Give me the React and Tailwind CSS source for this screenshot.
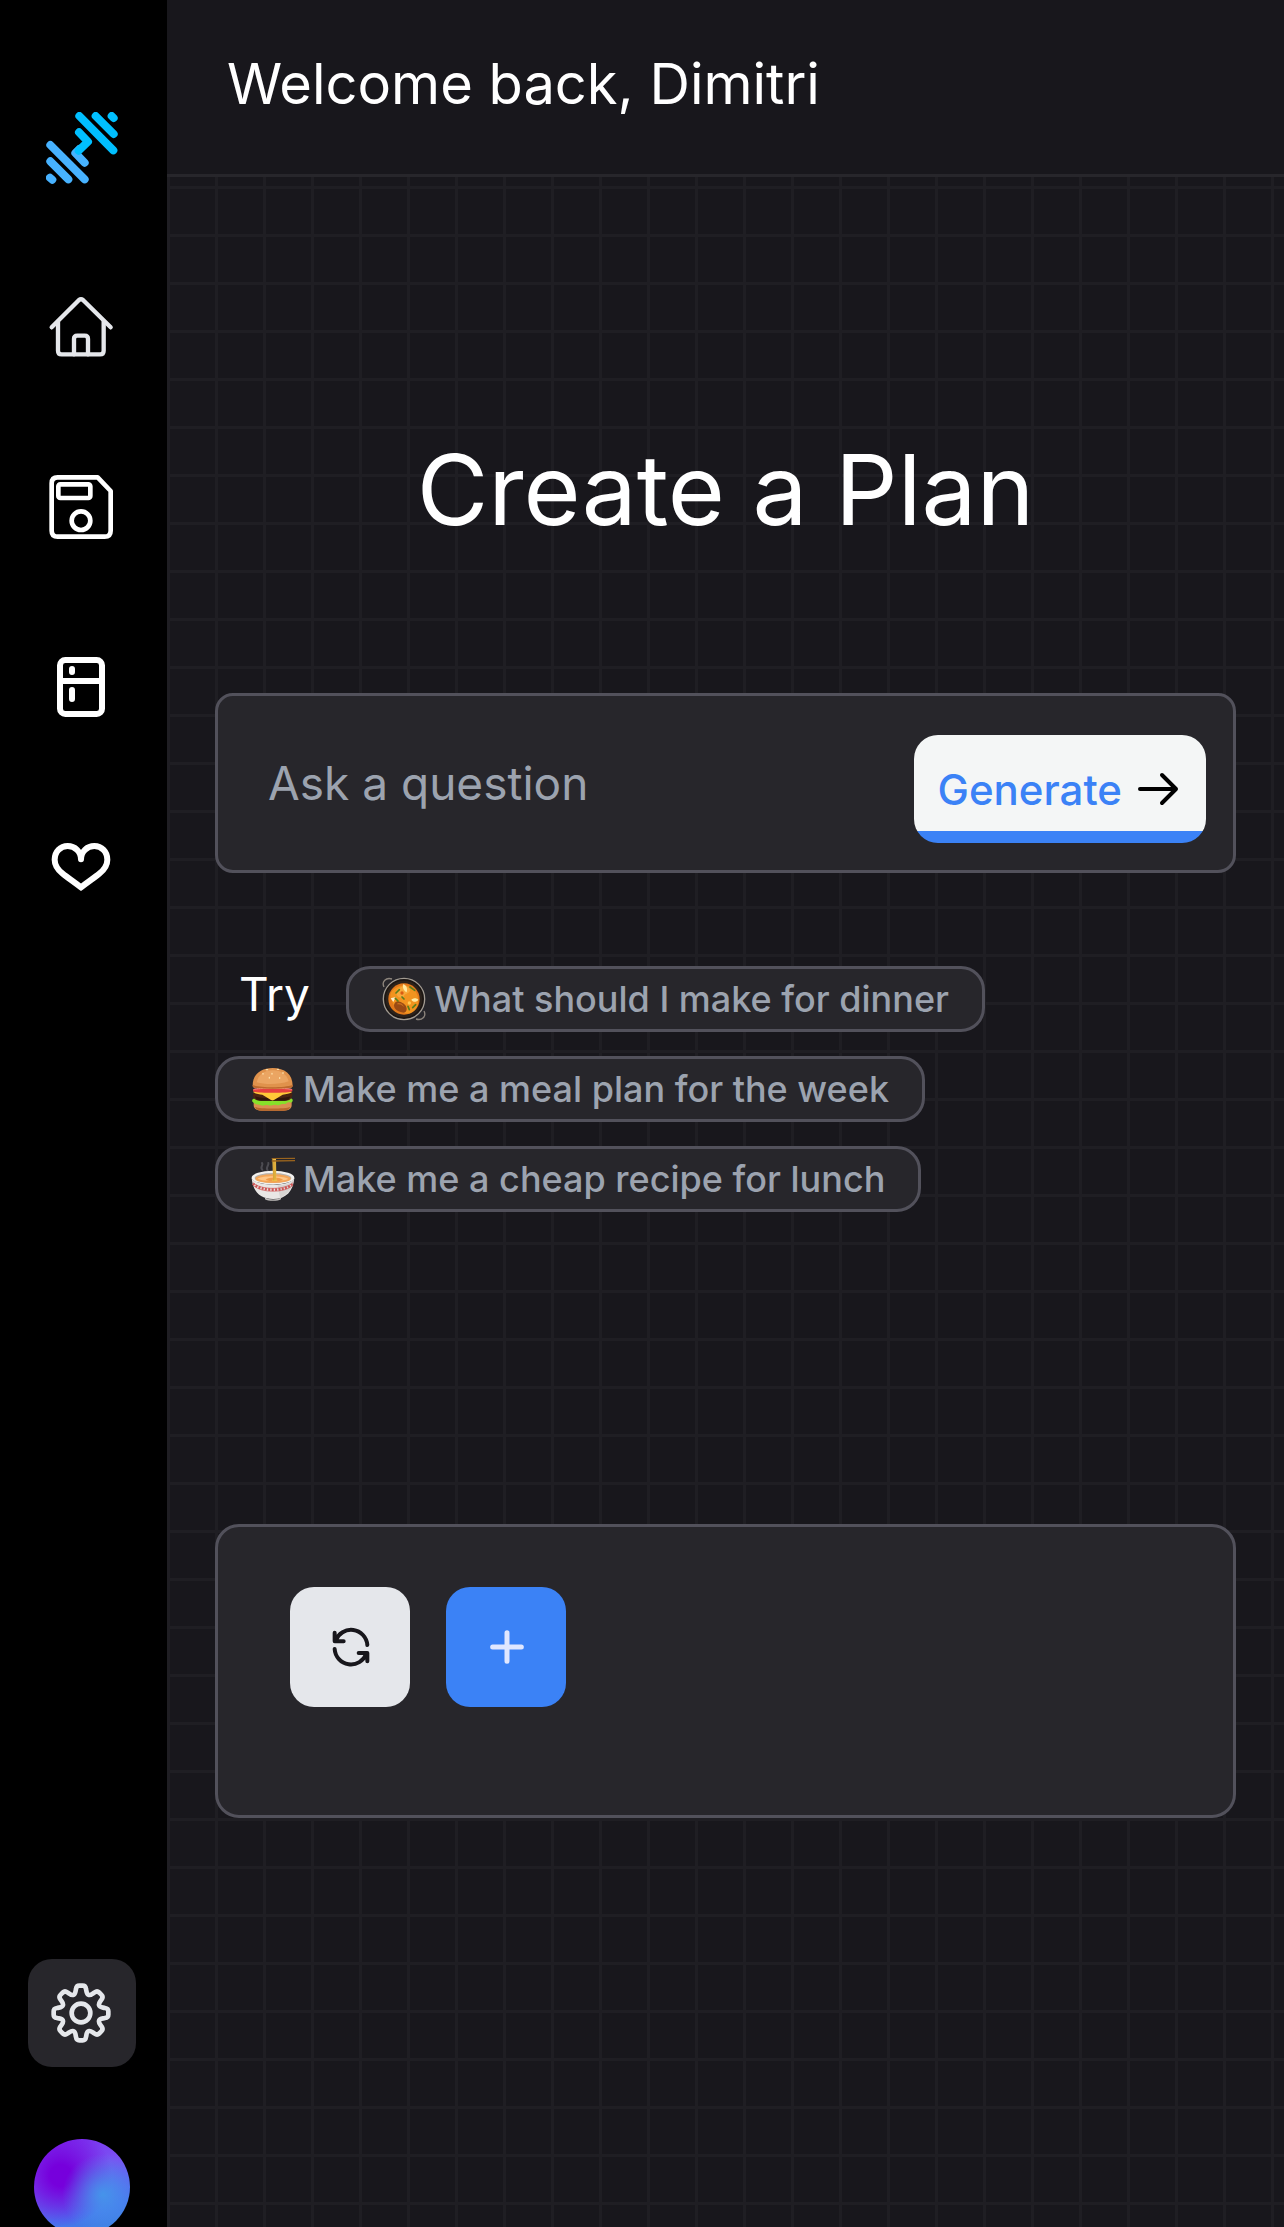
import React from "react";

const strokeProps = {
  fill: "none",
  stroke: "currentColor",
  strokeLinecap: "round",
  strokeLinejoin: "round",
  "aria-hidden": true,
};

function Logo() {
  return (
    <svg viewBox="0 0 216 216" className="size-[72px]" {...strokeProps} strokeWidth="24">
      <g stroke="#47b2ff">
        <path d="M13 99 116 202M13 148l54 54M12 197l7 6M116 152 88 123l12-12" />
      </g>
      <g stroke="#00bfff">
        <path d="M100 12 202 115M149 12l54 54M197 12l6 6M99 61l27 28-28 27" />
      </g>
    </svg>
  );
}

function HomeIcon() {
  return (
    <svg viewBox="0 0 216 216" className="size-[72px]" {...strokeProps} strokeWidth="13">
      <path d="M17 109 99 27q6-5 12 0l83 82" />
      <path d="M36 92v87q0 11 11 11h115q11 0 11-11V92" />
      <path d="M84 190v-46q0-10 10-10h22q10 0 10 10v46" />
    </svg>
  );
}

function SaveIcon() {
  return (
    <svg viewBox="0 0 216 216" className="size-[72px]" {...strokeProps} strokeWidth="14">
      <path d="M35 19h120l39 41v119q0 18-18 18H35q-18 0-18-18V37q0-18 18-18Z" />
      <rect x="37" y="40" width="96" height="41" rx="6" />
      <circle cx="105" cy="149" r="28" />
    </svg>
  );
}

function FridgeIcon() {
  return (
    <svg viewBox="0 0 216 216" className="size-[72px]" {...strokeProps} strokeWidth="18">
      <rect x="42" y="27" width="126" height="162" rx="16" />
      <path d="M42 90h126M78 54v9M78 117v27" />
    </svg>
  );
}

function HeartIcon() {
  return (
    <svg viewBox="0 0 216 216" className="size-[72px]" {...strokeProps} strokeWidth="18" strokeLinejoin="miter">
      <path d="M105 85C105 62 87 45 65 45 43 45 26 62 26 86c0 17 8 29 24 42 15 12 33 24 55 41 22-17 40-29 55-41 16-13 24-25 24-42 0-24-17-41-39-41s-40 17-40 40" />
    </svg>
  );
}

// One tooth pointing up, drawn round the origin; the gear repeats it eight times.
const TOOTH = [
  [-16, -57], [-17, -64], [-15, -72],
  [-14, -79], [-11, -82], [-5, -82],
  [-2, -82], [2, -82], [5, -82],
  [11, -82], [14, -79], [15, -72],
  [17, -64], [16, -57], [22.6, -54.5],
];

const GEAR_PATH =
  "M-22.6 -54.5" +
  Array.from({ length: 8 }, (_, i) => {
    const c = Math.cos((i * Math.PI) / 4);
    const s = Math.sin((i * Math.PI) / 4);
    return "C" + TOOTH.map(([x, y]) => `${(x * c - y * s).toFixed(2)} ${(x * s + y * c).toFixed(2)}`).join(" ");
  }).join("") +
  "Z";

function GearIcon() {
  return (
    <svg viewBox="-105 -108 216 216" className="size-[72px]" {...strokeProps} strokeWidth="14">
      <path d={GEAR_PATH} />
      <circle r="28" />
    </svg>
  );
}

function ArrowIcon() {
  return (
    <svg viewBox="0 0 144 144" className="size-12 shrink-0 text-black" {...strokeProps} strokeWidth="12">
      <path d="M18 72h108M84 30l42 42-42 42" />
    </svg>
  );
}

function RefreshIcon() {
  return (
    <svg viewBox="0 0 144 144" className="size-12" {...strokeProps} strokeWidth="12">
      <path d="M124 66A49 49 0 0 0 29 53M26 29v26h27" />
      <path d="M26 78A49 49 0 0 0 121 92M124 115V90H98" />
    </svg>
  );
}

function PlusIcon() {
  return (
    <svg viewBox="0 0 144 144" className="size-12" {...strokeProps} strokeWidth="15">
      <path d="M75 29v86M32 72h86" />
    </svg>
  );
}

function CurryEmoji() {
  return (
    <svg viewBox="0 0 132 132" className="size-11 shrink-0" aria-hidden="true">
      <g fill="none" stroke="#8d857c" strokeWidth="4">
        <path d="M6 30C-2 14 12 0 30 6" />
        <path d="M126 102c8 16-6 30-24 24" />
      </g>
      <circle cx="66" cy="66" r="62" fill="#1c1613" stroke="#a29b92" strokeWidth="4" />
      <circle cx="66" cy="66" r="55" fill="#2c221b" />
      <circle cx="66" cy="66" r="47" fill="#e3791a" />
      <path d="M30 42c20-24 57-22 72 4s4 55-16 62-45-8-52-26-14-26-4-40Z" fill="#f2941f" />
      <path d="M54 32c14-9 30-2 30 8s-14 8-18 17-18 5-22-4 0-15 10-21Z" fill="#f8a93a" />
      <path d="M36 84c2-10 10-14 18-10 10 4 20 10 20 22 0 9-7 13-16 10-12-4-22-10-22-22Z" fill="#9a4a14" />
      <path d="M48 78c8-1 16 4 18 12-8-8-14-9-22-8Z" fill="#c8701f" />
      <path d="M63 22c10 2 15 12 11 24-8-4-13-13-11-24ZM88 68c6-6 16-6 21 0-5 8-16 9-21 0Z" fill="#ffe9a0" />
      <path d="m26 64 15-4-7 15Z" fill="#fff0cc" />
      <path d="m84 30 14 10M42 48l10-10M92 92l9-9M78 88l4 10M40 64l8 8M60 60l6 6" stroke="#5a7d1c" strokeWidth="5" strokeLinecap="round" />
      <circle cx="82" cy="78" r="5" fill="#ffc851" />
      <circle cx="60" cy="48" r="5" fill="#d95b12" />
    </svg>
  );
}

function BurgerEmoji() {
  return (
    <svg viewBox="0 0 132 132" className="size-11 shrink-0" aria-hidden="true">
      <path d="M8 102h114v12c0 12-10 17-24 17H32c-14 0-24-5-24-17Z" fill="#d99050" />
      <path d="M12 120c16 6 90 6 106 0-3 8-10 11-20 11H32c-10 0-17-3-20-11Z" fill="#b9672c" />
      <path d="M4 98c8-8 18 1 28-3s20 4 33 3 20-6 31-3 20-7 28 2c4 6-3 12-9 9s-10 7-18 5-12 6-21 3-15 4-24 1-14 4-22 0-10-1-17-5-11-5-9-12Z" fill="#86e02a" />
      <path d="M6 84c0-9 8-12 18-12h82c10 0 18 3 18 12s-8 17-20 17H26C14 101 6 94 6 84Z" fill="#4a2412" />
      <path d="M12 88c16 8 90 8 106 0-2 8-8 13-18 13H30c-10 0-16-5-18-13Z" fill="#30160b" />
      <path d="M6 75c10-6 108-6 118 0-6 5-19 6-29 8L69 99c-3 2-6 2-9 0L34 83c-9-2-22-3-28-8Z" fill="#ffc938" />
      <path d="M6 67c6-5 112-5 118 0v6c-10 6-108 6-118 0Z" fill="#e64040" />
      <path d="M8 67c12-4 102-4 114 0" stroke="#ff9d8c" strokeWidth="3" fill="none" />
      <path d="M5 56C5 22 29 3 65 3s60 19 60 53c0 5-4 7-12 7-31 3-65 3-96 0-8 0-12-2-12-7Z" fill="#e0924c" />
      <path d="M17 46C22 24 40 10 65 10c27 0 43 14 48 33-28 10-68 11-96 3Z" fill="#eba562" />
      <path d="M5 54c24 9 96 9 120 0 1 7-4 9-12 9-31 3-65 3-96 0-8 0-13-2-12-9Z" fill="#bd6a2d" />
      <g fill="#ffe3ae">
        <ellipse cx="48" cy="8" rx="4" ry="2" />
        <ellipse cx="81" cy="7" rx="4" ry="2" />
        <ellipse cx="36" cy="20" rx="2" ry="3" />
        <ellipse cx="63" cy="20" rx="2" ry="3" />
        <ellipse cx="96" cy="18" rx="3" ry="2" />
        <ellipse cx="55" cy="32" rx="2" ry="3" />
        <ellipse cx="86" cy="33" rx="2" ry="3" />
      </g>
    </svg>
  );
}

function NoodlesEmoji() {
  return (
    <svg viewBox="0 0 132 132" className="size-11 shrink-0" aria-hidden="true">
      <g fill="none" stroke="#4d4c52" strokeWidth="6" strokeLinecap="round">
        <path d="M34 38c-9-8 5-13-1-20M50 40c-8-8 5-15 2-22" />
      </g>
      <ellipse cx="66" cy="62" rx="64" ry="21" fill="#f3f1ee" />
      <path d="M2 62c3 40 24 64 64 64s61-24 64-64c-8 28-120 28-128 0Z" fill="#e9e7e5" />
      <path d="M87 122c24-9 38-29 43-60-7 20-27 21-50 23Z" fill="#cfcccb" opacity=".7" />
      <ellipse cx="66" cy="63" rx="55" ry="15" fill="#b9b2aa" />
      <ellipse cx="66" cy="65" rx="53" ry="13" fill="#f4a557" />
      <path d="M20 65c18-10 76-9 92 1-18 8-75 9-92-1Z" fill="#ffc685" />
      <path d="M44 68c8-8 40-9 52 0-12 7-40 7-52 0Z" fill="#f09b48" />
      <path d="M64 5h11l1 58c0 7 4 9 7 10H61c4-3 5-6 5-10Z" fill="#ecc04c" />
      <path d="M68 8v62M72 9v59" stroke="#c99428" strokeWidth="2" />
      <path d="M62 3l70-1v4L62 6ZM62 10l70-1v4l-70 1Z" fill="#9a641e" />
      <path d="M6 80c22 24 98 24 120 0" fill="none" stroke="#cf5555" strokeWidth="8" strokeDasharray="6 4" />
      <path d="M5 76c22 24 100 24 122 0M9 87c22 21 92 21 114 0" fill="none" stroke="#cf5555" strokeWidth="2" />
      <path d="M42 121c9 9 39 9 48 0v6c-10 6-38 6-48 0Z" fill="#c2bfbd" />
    </svg>
  );
}

const navItems = [
  { label: "Home", icon: HomeIcon, color: "text-gray-200" },
  { label: "Saved", icon: SaveIcon, color: "text-white" },
  { label: "Fridge", icon: FridgeIcon, color: "text-white" },
  { label: "Favorites", icon: HeartIcon, color: "text-white" },
];

const suggestions = [
  { text: "What should I make for dinner", icon: CurryEmoji },
  { text: "Make me a meal plan for the week", icon: BurgerEmoji },
  { text: "Make me a cheap recipe for lunch", icon: NoodlesEmoji },
];

function Sidebar() {
  return (
    <aside className="sticky top-0 flex h-screen w-[167px] shrink-0 flex-col items-center overflow-hidden bg-black pr-[3px] pt-28">
      <a href="#" aria-label="Dashboard">
        <Logo />
      </a>
      <nav className="mt-[89px] flex flex-col gap-[72px]">
        {navItems.map(({ label, icon: Icon, color }) => (
          <a key={label} href="#" aria-label={label} className={`flex size-[108px] items-center justify-center rounded-3xl ${color}`}>
            <Icon />
          </a>
        ))}
      </nav>
      <div className="-mb-2 mt-auto flex flex-col items-center gap-[72px]">
        <button type="button" aria-label="Settings" className="flex size-[108px] items-center justify-center rounded-3xl bg-[#27262b] text-gray-200">
          <GearIcon />
        </button>
        <button
          type="button"
          aria-label="Account"
          className="size-24 rounded-full bg-[radial-gradient(circle_at_72%_58%,#4594ea_0%,#4594ea00_46%),radial-gradient(circle_at_28%_38%,#7600dc_12%,#7600dc00_56%),linear-gradient(165deg,#7c2cf0_0%,#7a52f2_35%,#4a72f0_72%,#3587d8_100%)]"
        />
      </div>
    </aside>
  );
}

export default function App() {
  return (
    <div className="flex min-h-screen bg-[#18171c] font-[Inter,sans-serif] text-white">
      <Sidebar />
      <div className="flex min-w-0 flex-1 flex-col">
        <header className="border-b-[3px] border-[#27262b] px-[60px] pb-[54px] pt-12">
          <p className="text-[56px] leading-[72px]">Welcome back, Dimitri</p>
        </header>
        <main className="flex-1 bg-[linear-gradient(to_right,#1f1e23_3px,transparent_3px),linear-gradient(to_bottom,#1f1e23_3px,transparent_3px)] bg-[length:48px_48px] bg-[position:0_9px] px-12 pb-24 pt-[259px]">
          <h1 className="text-center text-[98px] leading-[108px]">Create a Plan</h1>

          <form
            className="mt-[149px] flex items-start rounded-[18px] border-[3px] border-[#52515b] bg-[#27262b] pb-[27px] pl-[50px] pr-[27px] pt-[39px]"
            onSubmit={(e) => e.preventDefault()}
          >
            <input
              type="text"
              aria-label="Ask a question"
              placeholder="Ask a question"
              className="h-24 min-w-0 flex-1 bg-transparent text-[46px] outline-none placeholder:text-[#9ca3af]"
            />
            <button
              type="submit"
              className="flex h-[108px] items-center gap-3 overflow-hidden rounded-3xl bg-[linear-gradient(to_top,#3b82f6_12px,#f4f6f6_12px)] px-6 text-[42px] font-medium text-[#3b82f6]"
            >
              Generate
              <ArrowIcon />
            </button>
          </form>

          <div className="mt-[93px] flex flex-wrap items-start gap-6">
            <span className="ml-6 mr-3 text-[46px] leading-[56px]">Try</span>
            {suggestions.map(({ text, icon: Icon }) => (
              <button
                key={text}
                type="button"
                className="flex h-[66px] items-center gap-2 rounded-3xl border-[3px] border-[#52515b] bg-[#27262b] px-[33px] text-[36px] font-medium text-[#9ca3af]"
              >
                <Icon />
                {text}
              </button>
            ))}
          </div>

          <section aria-label="Plan" className="mt-[312px] flex gap-9 rounded-3xl border-[3px] border-[#52515b] bg-[#27262b] px-[72px] pb-[108px] pt-[60px]">
            <button type="button" aria-label="Regenerate" className="flex size-[120px] items-center justify-center rounded-3xl bg-gray-200 text-[#18171c]">
              <RefreshIcon />
            </button>
            <button type="button" aria-label="Add" className="flex size-[120px] items-center justify-center rounded-3xl bg-[#3b82f6] text-indigo-100">
              <PlusIcon />
            </button>
          </section>
        </main>
      </div>
    </div>
  );
}
